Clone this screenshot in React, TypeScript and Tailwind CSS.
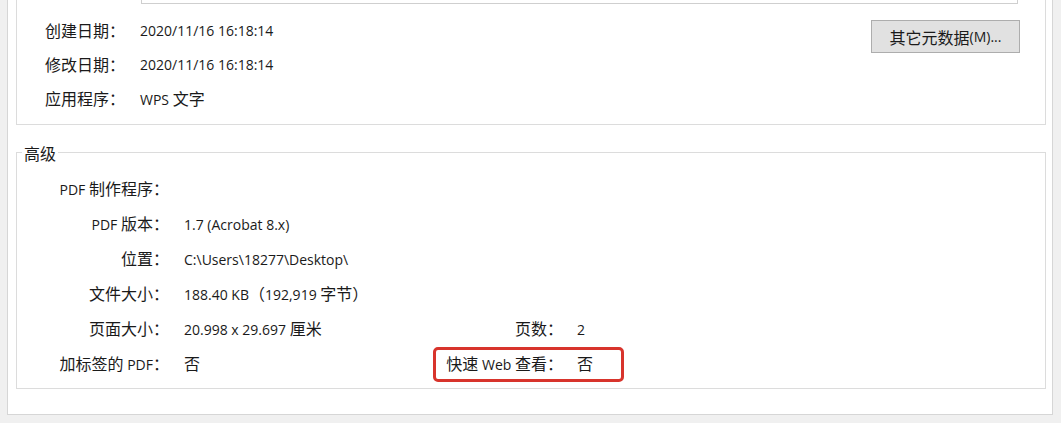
import React from "react";

const CJK = /([\u2E80-\u9FFF\uFF00-\uFFEF]+)/;

function T({ s }: { s: string }) {
  const parts = s.split(CJK).filter((p) => p.length > 0);
  return (
    <>
      {parts.map((p, i) =>
        CJK.test(p) ? (
          <span key={i} className="font-['Noto_Sans_CJK_SC',sans-serif] text-[16px]">
            {p}
          </span>
        ) : (
          <span key={i} className="font-['Open_Sans','Noto_Sans_CJK_SC',sans-serif] text-[14px]">
            {p}
          </span>
        )
      )}
    </>
  );
}

function Row1({ label, value }: { label: string; value: string }) {
  return (
    <div className="flex h-[34px] items-center whitespace-nowrap">
      <div className="ml-[28px] w-[95px]">
        <T s={label} />
      </div>
      <div>
        <T s={value} />
      </div>
    </div>
  );
}

function Row2({
  label,
  value,
  label2,
  value2,
}: {
  label: string;
  value?: string;
  label2?: string;
  value2?: string;
}) {
  return (
    <div className="flex h-[35px] items-center whitespace-nowrap">
      <div className="w-[152px] text-right">
        <T s={label} />
      </div>
      <div className="ml-[15px] w-[236px]">{value ? <T s={value} /> : null}</div>
      {label2 ? (
        <>
          <div className="w-[143px] text-right">
            <T s={label2} />
          </div>
          <div className="ml-[14px]">
            <T s={value2 || ""} />
          </div>
        </>
      ) : null}
    </div>
  );
}

export default function App() {
  return (
    <div className="h-[423px] w-[1061px] overflow-hidden bg-[#f0f0f0] text-[#1a1a1a] leading-none">
      <div className="ml-[7px] h-[415px] w-[1046px] border-x border-b border-[#d6d6d6] bg-white">
        {/* top group */}
        <div className="ml-[8px] h-[125px] w-[1030px] border-x border-b border-[#dcdcdc]">
          <div className="ml-[124px] h-[4px] w-[877px] border-x border-b border-[#cfcfcf]" />
          <div className="flex">
            <div className="flex-1 pt-[9px]">
              <Row1 label="创建日期：" value="2020/11/16 16:18:14" />
              <Row1 label="修改日期：" value="2020/11/16 16:18:14" />
              <Row1 label="应用程序：" value="WPS 文字" />
            </div>
            <div className="mr-[25px] mt-[16px]">
              <button className="flex h-[33px] w-[149px] items-center justify-center border border-[#adadad] bg-[#e1e1e1] text-[#1a1a1a]">
                <T s="其它元数据(M)..." />
              </button>
            </div>
          </div>
        </div>

        {/* advanced group */}
        <div className="relative ml-[8px] mt-[27px] h-[237px] w-[1030px] border border-[#dcdcdc]">
          <div className="absolute left-[5px] top-[-10px] bg-white px-[2px] leading-[20px]">
            <T s="高级" />
          </div>
          <div className="pt-[18px]">
            <Row2 label="PDF 制作程序：" />
            <Row2 label="PDF 版本：" value="1.7 (Acrobat 8.x)" />
            <Row2 label="位置：" value="C:\Users\18277\Desktop\" />
            <Row2 label="文件大小：" value="188.40 KB（192,919 字节）" />
            <Row2 label="页面大小：" value="20.998 x 29.697 厘米" label2="页数：" value2="2" />
            <Row2 label="加标签的 PDF：" value="否" label2="快速 Web 查看：" value2="否" />
          </div>
          <div className="absolute left-[416px] top-[194px] h-[35px] w-[191px] rounded-[5px] border-[3px] border-[#d8342c]" />
        </div>
      </div>
    </div>
  );
}
